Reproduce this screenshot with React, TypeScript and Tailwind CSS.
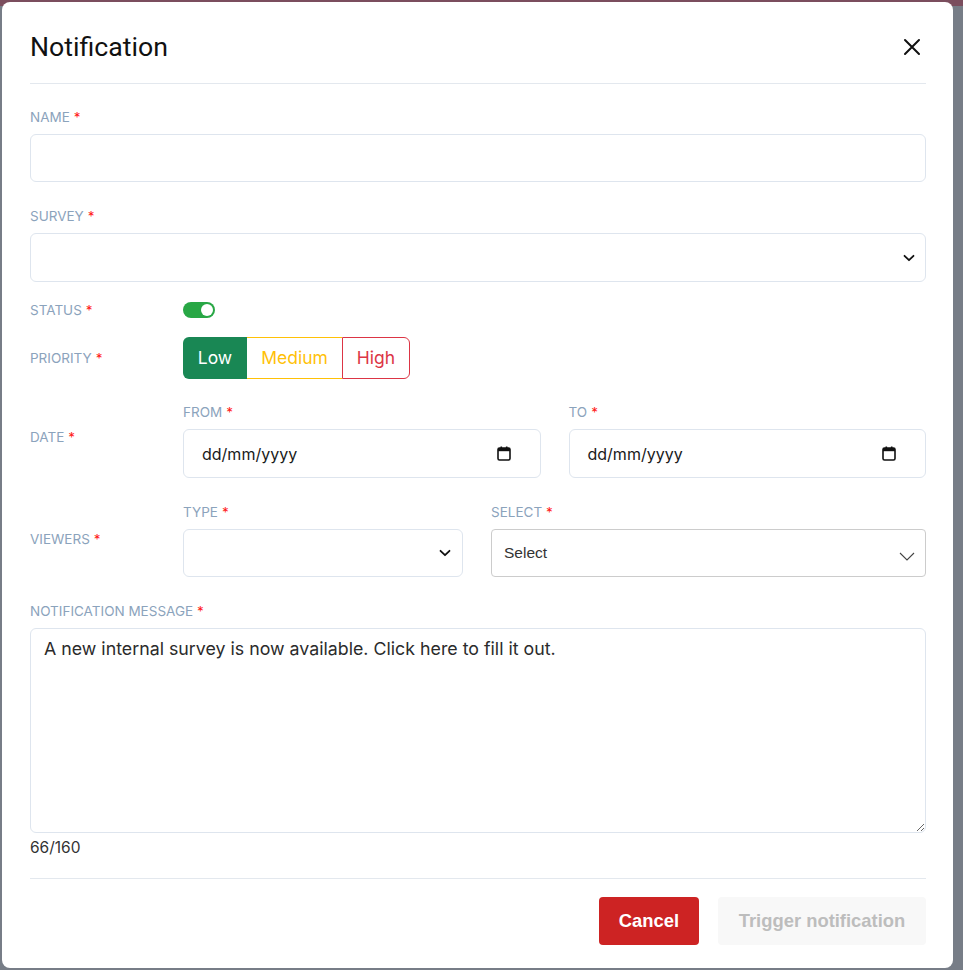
import React from 'react';

const labelCls = "h-[16px] leading-[16px] text-[13.5px] uppercase text-[#8ba3bc] font-['Inter',sans-serif]";

function Req() {
  return <span className="ml-[4px] text-[#ff1a1a]">*</span>;
}

function Label({ children, className = '' }: { children: React.ReactNode; className?: string }) {
  return (
    <div className={`${labelCls} ${className}`}>
      {children}
      <Req />
    </div>
  );
}

function Chevron({ className = '' }: { className?: string }) {
  return (
    <svg viewBox="0 0 12 8" className={className} fill="none" stroke="#111" strokeWidth="1.8" strokeLinecap="round" strokeLinejoin="round">
      <path d="M1.5 1.8 6 6.2l4.5-4.4" />
    </svg>
  );
}

function ThinChevron() {
  return (
    <svg viewBox="0 0 16 9" className="h-[9px] w-[16px]" fill="none" stroke="#444" strokeWidth="1.1">
      <path d="M1 1l7 7 7-7" />
    </svg>
  );
}

function CalendarIcon() {
  return (
    <svg viewBox="0 0 14 15" className="h-[15px] w-[14px]">
      <rect x="1" y="2" width="12" height="12" rx="1.5" fill="none" stroke="#111" strokeWidth="1.6" />
      <rect x="1" y="2" width="12" height="3.2" fill="#111" />
      <rect x="3.5" y="0.5" width="1.6" height="2.5" fill="#111" />
      <rect x="8.9" y="0.5" width="1.6" height="2.5" fill="#111" />
    </svg>
  );
}

function DateBox() {
  return (
    <div className="mt-[9px] flex h-[49px] items-center justify-between rounded-[6px] border border-[#dee5ee] pl-[18px] pr-[29px] font-['Inter',sans-serif] text-[16px] text-[#1a1a1a]">
      <span>dd/mm/yyyy</span>
      <CalendarIcon />
    </div>
  );
}

export default function App() {
  const message = 'A new internal survey is now available. Click here to fill it out.';

  return (
    <div className="relative h-[970px] w-full overflow-hidden bg-[#777d87] pl-[2px] pt-[2px]">
      {/* page behind the overlay */}
      <div className="absolute inset-x-0 top-0 h-[6px] bg-[#7b4e5e]" />

      <div className="relative h-[966px] w-[951px] rounded-[8px] bg-white pl-[28px] pr-[27px]">
        {/* header */}
        <div className="flex h-[82px] items-center justify-between border-b border-[#e3e8ee] pt-[9px]">
          <h1 className="font-['Roboto',sans-serif] text-[26.7px] font-normal text-[#111]">Notification</h1>
          <button className="mr-[5px]" aria-label="Close">
            <svg viewBox="0 0 18 18" className="h-[18px] w-[18px]" fill="none" stroke="#111" strokeWidth="2" strokeLinecap="round">
              <path d="M2 2l14 14M16 2 2 16" />
            </svg>
          </button>
        </div>

        {/* name */}
        <Label className="mt-[25px]">Name</Label>
        <div className="mt-[9px] h-[48px] rounded-[6px] border border-[#dee5ee]" />

        {/* survey */}
        <Label className="mt-[26px]">Survey</Label>
        <div className="mt-[9px] flex h-[49px] items-center justify-end rounded-[6px] border border-[#dee5ee] pr-[10px]">
          <Chevron className="h-[8px] w-[12px]" />
        </div>

        {/* status */}
        <div className="mt-[20px] flex h-[16px] items-center">
          <div className="w-[153px]">
            <Label>Status</Label>
          </div>
          <div className="flex h-[16px] w-[32px] items-center justify-end rounded-full bg-[#28a745] pr-[2px]">
            <div className="h-[12px] w-[12px] rounded-full bg-white" />
          </div>
        </div>

        {/* priority */}
        <div className="mt-[19px] flex h-[42px] items-center">
          <div className="w-[153px]">
            <Label>Priority</Label>
          </div>
          <div className="flex h-[42px] font-['Inter',sans-serif] text-[17.5px]">
            <div className="flex w-[64px] items-center justify-center rounded-l-[6px] bg-[#198754] text-white">Low</div>
            <div className="flex w-[95px] items-center justify-center border-y border-[#ffc107] text-[#ffc107]">Medium</div>
            <div className="flex w-[68px] items-center justify-center rounded-r-[6px] border border-[#dc3545] text-[#dc3545]">High</div>
          </div>
        </div>

        {/* date */}
        <div className="mt-[25px] flex">
          <div className="w-[153px]">
            <Label className="mt-[25px]">Date</Label>
          </div>
          <div className="grid flex-1 grid-cols-2 gap-[28px]">
            <div>
              <Label>From</Label>
              <DateBox />
            </div>
            <div>
              <Label>To</Label>
              <DateBox />
            </div>
          </div>
        </div>

        {/* viewers */}
        <div className="mt-[26px] flex">
          <div className="w-[153px]">
            <Label className="mt-[27px]">Viewers</Label>
          </div>
          <div className="flex flex-1 gap-[28px]">
            <div className="w-[280px]">
              <Label>Type</Label>
              <div className="mt-[9px] flex h-[48px] items-center justify-end rounded-[6px] border border-[#dee5ee] pr-[11px]">
                <Chevron className="h-[8px] w-[12px]" />
              </div>
            </div>
            <div className="flex-1">
              <Label>Select</Label>
              <div className="mt-[9px] flex h-[48px] items-center justify-between rounded-[4px] border border-[#cccccc] pl-[12px] pr-[10px] font-['Liberation_Sans',sans-serif] text-[15.5px] text-[#333]">
                <span>Select</span>
                <span className="mt-[6px]">
                  <ThinChevron />
                </span>
              </div>
            </div>
          </div>
        </div>

        {/* message */}
        <Label className="mt-[26px]">Notification message</Label>
        <textarea
          readOnly
          defaultValue={message}
          className="mt-[9px] block h-[205px] w-full rounded-[6px] border border-[#dee5ee] px-[13px] pt-[8px] font-['Inter',sans-serif] text-[17.8px] leading-[24px] text-[#2b2b2b] outline-none"
        />
        <div className="mt-[5px] h-[20px] font-['Inter',sans-serif] text-[15.5px] leading-[20px] text-[#333]">
          {message.length}/160
        </div>

        {/* footer */}
        <div className="mt-[20px] flex justify-end gap-[19px] border-t border-[#e3e8ee] pt-[18px] font-['Liberation_Sans',sans-serif] text-[18.4px] font-bold">
          <button className="h-[48px] w-[100px] rounded-[4px] bg-[#cd2323] text-white">Cancel</button>
          <button className="h-[48px] w-[208px] rounded-[4px] bg-[#f8f8f8] text-[#bdbdbd]">Trigger notification</button>
        </div>
      </div>
    </div>
  );
}
